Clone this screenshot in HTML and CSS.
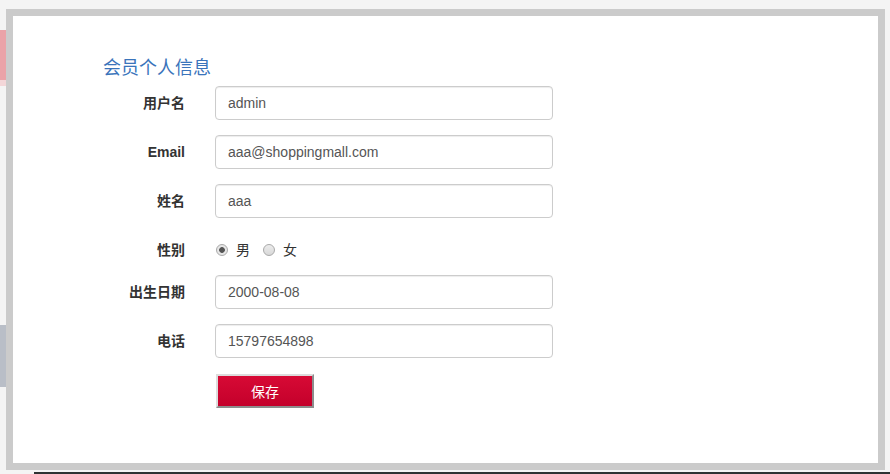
FILE: index.html
```html
<!DOCTYPE html>
<html lang="zh-CN">
<head>
<meta charset="utf-8">
<title>会员个人信息</title>
<link rel="stylesheet" href="styles.css">
</head>
<body>
<div class="modal">
  <h4 class="title">会员个人信息</h4>
  <form class="form">
    <label class="lbl">用户名</label>
    <input class="ctl" type="text" value="admin">
    <label class="lbl">Email</label>
    <input class="ctl" type="text" value="aaa@shoppingmall.com">
    <label class="lbl">姓名</label>
    <input class="ctl" type="text" value="aaa">
    <label class="lbl lbl-top">性别</label>
    <div class="radios">
      <label class="radio"><input type="radio" name="sex" checked><span>男</span></label>
      <label class="radio"><input type="radio" name="sex"><span>女</span></label>
    </div>
    <label class="lbl">出生日期</label>
    <input class="ctl" type="text" value="2000-08-08">
    <label class="lbl">电话</label>
    <input class="ctl" type="text" value="15797654898">
    <div></div>
    <div class="actions"><button type="button" class="btn">保存</button></div>
  </form>
</div>
</body>
</html>
```
FILE: styles.css
```css
html, body {
  margin: 0;
  padding: 0;
}
body {
  width: 890px;
  height: 474px;
  overflow: hidden;
  font-family: "Liberation Sans", "Noto Sans CJK SC", sans-serif;
  font-size: 14px;
  color: #333;
  background:
    linear-gradient(#eaa3a8, #eaa3a8) no-repeat 0 30px / 6px 50px,
    linear-gradient(#f3d6d8, #f3d6d8) no-repeat 0 80px / 6px 6px,
    linear-gradient(#b9bec7, #b9bec7) no-repeat 0 325px / 6px 62px,
    linear-gradient(#2e3333, #2e3333) no-repeat 34px 472px / 856px 2px,
    #f4f4f4;
}
.modal {
  box-sizing: border-box;
  margin: 9px 0 0 6px;
  width: 879px;
  height: 461px;
  border: 7px solid #cbcbcb;
  background: #fff;
  padding: 42px 0 0 90px;
}
.title {
  margin: 0 0 8px 0;
  font-size: 18px;
  line-height: 20px;
  font-weight: normal;
  color: #3a74bb;
}
.form {
  display: grid;
  grid-template-columns: 82px 338px;
  column-gap: 30px;
  row-gap: 15px;
  margin: 0;
}
.lbl {
  align-self: center;
  text-align: right;
  font-weight: bold;
  line-height: 20px;
  color: #333;
  white-space: nowrap;
}
.lbl-top {
  align-self: start;
  padding-top: 7px;
}
.ctl {
  box-sizing: border-box;
  height: 34px;
  width: 338px;
  padding: 6px 12px;
  border: 1px solid #ccc;
  border-radius: 4px;
  font-family: "Liberation Sans", "Noto Sans CJK SC", sans-serif;
  font-size: 14px;
  color: #555;
  background: #fff;
  box-shadow: inset 0 1px 1px rgba(0,0,0,.075);
  outline: none;
}
.radios {
  box-sizing: border-box;
  height: 27px;
  padding-top: 7px;
  display: flex;
  align-items: flex-start;
  gap: 12px;
  line-height: 20px;
}
.radio {
  display: flex;
  align-items: center;
  gap: 8px;
  height: 20px;
  color: #333;
}
.radio input {
  appearance: none;
  -webkit-appearance: none;
  margin: 0 0 0 1px;
  width: 12px;
  height: 12px;
  box-sizing: border-box;
  border: 1px solid #a9a9a9;
  border-radius: 50%;
  background: linear-gradient(#ececec, #d8d8d8);
}
.radio input:checked {
  background: radial-gradient(circle, #555 0, #555 2.5px, #e6e6e6 3.2px);
}
.actions {
  padding-top: 1px;
  padding-left: 1px;
}
.btn {
  box-sizing: border-box;
  width: 98px;
  height: 34px;
  border: 2px solid;
  border-color: #dcdcdc #8d8d8d #8d8d8d #dcdcdc;
  background: linear-gradient(#d70a35, #c4002b);
  color: #fff;
  font-family: "Liberation Sans", "Noto Sans CJK SC", sans-serif;
  font-size: 14px;
  padding: 0;
  cursor: pointer;
}
```
